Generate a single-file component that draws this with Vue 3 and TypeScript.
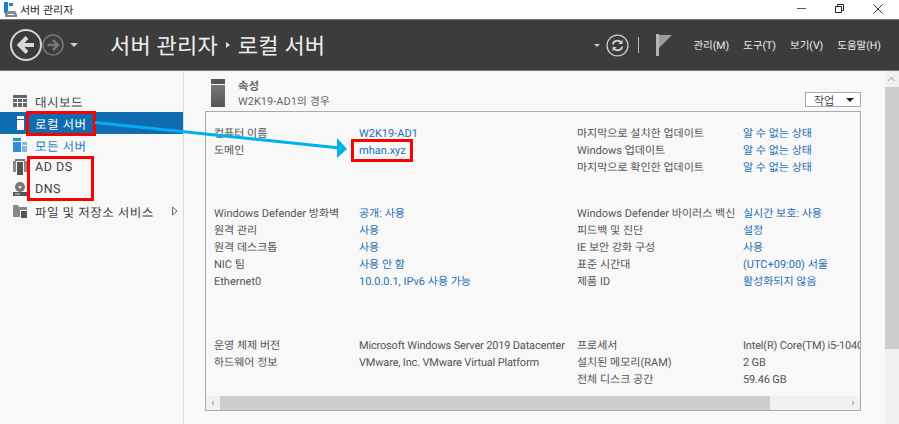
<script setup lang="ts">
interface Row { l1: string; v1: string; link1?: boolean; l2: string; v2: string; link2?: boolean }
const block1: Row[] = [
  { l1: '컴퓨터 이름', v1: 'W2K19-AD1', link1: true, l2: '마지막으로 설치한 업데이트', v2: '알 수 없는 상태', link2: true },
  { l1: '도메인', v1: 'mhan.xyz', link1: true, l2: 'Windows 업데이트', v2: '알 수 없는 상태', link2: true },
  { l1: '', v1: '', l2: '마지막으로 확인한 업데이트', v2: '알 수 없는 상태', link2: true },
]
const block2: Row[] = [
  { l1: 'Windows Defender 방화벽', v1: '공개: 사용', link1: true, l2: 'Windows Defender 바이러스 백신', v2: '실시간 보호: 사용', link2: true },
  { l1: '원격 관리', v1: '사용', link1: true, l2: '피드백 및 진단', v2: '설정', link2: true },
  { l1: '원격 데스크톱', v1: '사용', link1: true, l2: 'IE 보안 강화 구성', v2: '사용', link2: true },
  { l1: 'NIC 팀', v1: '사용 안 함', link1: true, l2: '표준 시간대', v2: '(UTC+09:00) 서울', link2: true },
  { l1: 'Ethernet0', v1: '10.0.0.1, IPv6 사용 가능', link1: true, l2: '제품 ID', v2: '활성화되지 않음', link2: true },
]
const block3: Row[] = [
  { l1: '운영 체제 버전', v1: 'Microsoft Windows Server 2019 Datacenter', l2: '프로세서', v2: 'Intel(R) Core(TM) i5-10400' },
  { l1: '하드웨어 정보', v1: 'VMware, Inc. VMware Virtual Platform', l2: '설치된 메모리(RAM)', v2: '2 GB' },
  { l1: '', v1: '', l2: '전체 디스크 공간', v2: '59.46 GB' },
]
const blocks = [block1, block2, block3]
</script>

<template>
  <div class="app">
    <header class="titlebar">
      <svg class="appicon" width="16" height="16" viewBox="0 0 16 16">
        <rect x="2" y="0" width="4" height="11" fill="#1f7fc4" />
        <rect x="7" y="1" width="4" height="3" fill="#1f7fc4" />
        <path d="M5 9h8l2 3v3H3v-4z" fill="#7d8c98" />
        <rect x="6" y="12" width="6" height="1" fill="#fff" />
      </svg>
      <span class="apptitle">서버 관리자</span>
      <div class="winctl">
        <svg width="14" height="14" viewBox="0 0 14 14"><path d="M2 6.500h9" stroke="#555" fill="none" /></svg>
        <svg width="14" height="14" viewBox="0 0 14 14"><path d="M2.500 4.500h6v6h-6zM4.500 4.500v-2h6v6h-2" stroke="#222" fill="none" /></svg>
        <svg width="14" height="14" viewBox="0 0 14 14"><path d="M2.500 2.500l9 9M11.500 2.500l-9 9" stroke="#333" fill="none" /></svg>
      </div>
    </header>

    <nav class="navbar">
      <svg class="back" width="34" height="34" viewBox="0 0 34 34">
        <circle cx="17" cy="17" r="15" fill="none" stroke="#d8d8d8" stroke-width="2" />
        <path d="M25 17H11M18 9.500L10.500 17l7.500 7.500" fill="none" stroke="#d8d8d8" stroke-width="4" />
      </svg>
      <svg class="fwd" width="22" height="22" viewBox="0 0 22 22">
        <circle cx="11" cy="11" r="10" fill="none" stroke="#777" stroke-width="1.500" />
        <path d="M5.500 11H15M11 6l5 5-5 5" fill="none" stroke="#777" stroke-width="2.500" />
      </svg>
      <span class="caret"></span>
      <div class="crumb">
        <span>서버 관리자</span><span class="sep"></span><span>로컬 서버</span>
      </div>
      <div class="tools">
        <span class="caret small"></span>
        <svg class="refresh" width="23" height="23" viewBox="0 0 22 22">
          <circle cx="11" cy="11" r="10" fill="none" stroke="#cfcfcf" stroke-width="1.200" />
          <path d="M6.500 10a4.500 4 0 0 1 8-2M15.500 12a4.500 4 0 0 1-8 2" fill="none" stroke="#cfcfcf" stroke-width="1.800" />
          <path d="M15.800 5.500v4h-4zM6.200 16.500v-4h4z" fill="#cfcfcf" />
        </svg>
        <span class="bar"></span>
        <svg class="flag" width="16" height="22" viewBox="0 0 16 22">
          <rect x="0" y="0" width="3" height="22" fill="#b5b5b5" />
          <path d="M3 1h13L3 14z" fill="#9c9c9c" />
        </svg>
        <div class="menu">
          <span>관리(M)</span><span>도구(T)</span><span>보기(V)</span><span>도움말(H)</span>
        </div>
      </div>
    </nav>

    <div class="body">
      <aside class="side">
        <div class="item">
          <svg class="ic" width="14" height="14" viewBox="0 0 14 14">
            <path fill="#666" d="M0 1h14v3H0zM0 5h4v3H0zM5 5h4v3H5zM10 5h4v3h-4zM0 9h4v4H0zM5 9h4v4H5zM10 9h4v4h-4z" />
          </svg>
          <span>대시보드</span>
        </div>
        <div class="item active">
          <svg class="ic" width="14" height="14" viewBox="0 0 14 14">
            <rect x="4" y="0" width="7" height="14" fill="#fff" />
            <rect x="4" y="3" width="7" height="1" fill="#0f6cb0" />
          </svg>
          <span>로컬 서버</span>
        </div>
        <div class="item blue">
          <svg class="ic" width="14" height="14" viewBox="0 0 14 14">
            <rect x="0" y="0" width="8" height="14" fill="#2e8fd8" /><rect x="0" y="3" width="8" height="1" fill="#fff" />
            <rect x="9" y="4" width="5" height="10" fill="#7cb8e6" /><rect x="9" y="7" width="5" height="1" fill="#fff" />
          </svg>
          <span>모든 서버</span>
        </div>
        <div class="item">
          <svg class="ic" width="14" height="16" viewBox="0 0 14 16">
            <rect x="0" y="2" width="3" height="11" fill="#888" /><rect x="11" y="2" width="3" height="11" fill="#888" />
            <rect x="4" y="3" width="6" height="13" fill="#555" /><rect x="2" y="0" width="10" height="2" fill="#777" />
          </svg>
          <span>AD DS</span>
        </div>
        <div class="item">
          <svg class="ic" width="14" height="15" viewBox="0 0 14 15">
            <circle cx="7" cy="5" r="5" fill="#777" /><circle cx="7" cy="5" r="1.500" fill="#ddd" />
            <rect x="0" y="10" width="14" height="4" fill="#555" /><rect x="2" y="11.500" width="5" height="1" fill="#ddd" />
          </svg>
          <span>DNS</span>
        </div>
        <div class="item">
          <svg class="ic" width="14" height="14" viewBox="0 0 14 14">
            <path fill="#888" d="M0 1h5l1 2h8v3H7v7H0z" /><rect x="8" y="7" width="6" height="7" fill="#555" />
          </svg>
          <span>파일 및 저장소 서비스</span>
          <svg class="expand" width="6" height="10" viewBox="0 0 6 10"><path d="M.500 1l4.500 4-4.500 4z" fill="#f8f8f8" stroke="#666" /></svg>
        </div>
      </aside>

      <main class="content">
        <div class="scrollpane">
          <div class="head">
            <div class="tower"></div>
            <div class="headtext">
              <div class="h1">속성</div>
              <div class="h2">W2K19-AD1의 경우</div>
            </div>
            <button class="task"><span>작업</span><i></i></button>
          </div>
          <section class="panel">
            <div class="grid-wrap">
              <div v-for="(block, bi) in blocks" :key="bi" class="block">
                <div v-for="(r, ri) in block" :key="ri" class="row">
                  <span class="c1">{{ r.l1 }}</span>
                  <span class="c2" :class="{ link: r.link1 }">{{ r.v1 }}</span>
                  <span class="c3">{{ r.l2 }}</span>
                  <span class="c4" :class="{ link: r.link2 }">{{ r.v2 }}</span>
                </div>
              </div>
            </div>
            <div class="hscroll">
              <span class="arr">‹</span>
              <div class="hthumb"></div>
              <span class="arr">›</span>
            </div>
          </section>
        </div>
        <div class="vscroll">
          <span class="uparr"></span>
          <div class="vthumb"></div>
        </div>
      </main>
    </div>

    <!-- annotations drawn over the screenshot -->
    <div class="mark m1"></div>
    <div class="mark m2"></div>
    <div class="mark m3"></div>
    <svg class="arrow" width="899" height="424" viewBox="0 0 899 424">
      <path d="M95 122.500L340 148" stroke="#00b0f0" stroke-width="3" fill="none" />
      <path d="M337 138L347 149L337 158z" fill="#00b0f0" />
    </svg>
  </div>
</template>

<style>
html, body { margin: 0; padding: 0; background: #fff; overflow: hidden; }
</style>

<style scoped>
.app {
  position: relative;
  width: 899px;
  height: 424px;
  overflow: hidden;
  font-family: Roboto, "Noto Sans CJK KR", sans-serif;
  font-size: 11px;
  text-rendering: geometricPrecision;
  color: #555;
  background: #f8f8f8;
  display: flex;
  flex-direction: column;
}
.titlebar {
  height: 19px;
  flex: none;
  background: #fff;
  display: flex;
  align-items: center;
  padding-left: 2px;
  color: #222;
}
.appicon { margin-right: 2px; }
.apptitle { font-size: 11px; }
.winctl {
  margin-left: auto;
  display: flex;
  gap: 24px;
  padding-right: 14px;
  margin-top: -1px;
}
.navbar {
  height: 52px;
  flex: none;
  box-sizing: border-box;
  background: #3c3c3c;
  border-top: 1px solid #777;
  border-bottom: 1px solid #777;
  display: flex;
  align-items: center;
  padding-left: 9px;
  color: #fff;
}
.back { flex: none; }
.fwd { flex: none; margin-left: -1px; }
.caret {
  width: 0;
  height: 0;
  border-left: 4px solid transparent;
  border-right: 4px solid transparent;
  border-top: 4px solid #ccc;
  margin-left: 6px;
}
.caret.small { border-left-width: 3px; border-right-width: 3px; border-top-width: 3px; margin: 0; }
.crumb {
  margin-left: 32px;
  font-size: 22px;
  color: #f0f0f0;
  display: flex;
  align-items: center;
  letter-spacing: 0.2px;
}
.sep {
  width: 0;
  height: 0;
  border-top: 3px solid transparent;
  border-bottom: 3px solid transparent;
  border-left: 4px solid #ddd;
  margin: 0 8px;
}
.tools {
  margin-left: auto;
  display: flex;
  align-items: center;
  height: 100%;
}
.refresh { margin-left: 6px; }
.bar { width: 1px; height: 16px; background: #bbb; margin: 0 17px 0 9px; }
.flag { margin-right: 21px; }
.menu {
  display: flex;
  gap: 14px;
  font-size: 10.500px;
  color: #eee;
  padding-right: 18px;
}
.body {
  flex: 1;
  display: flex;
  min-height: 0;
}
.side {
  width: 184px;
  flex: none;
  box-sizing: border-box;
  border-right: 1px solid #ddd;
  padding-top: 19px;
  background: #f8f8f8;
  height: 100%;
}
.item {
  height: 22px;
  display: flex;
  align-items: center;
  padding-left: 13px;
  font-size: 12.500px;
  color: #444;
  letter-spacing: 0.5px;
}
.item.active { background: #0f6cb0; color: #fff; }
.item.blue { color: #1f7fc4; }
.ic { flex: none; margin-right: 8px; }
.expand {
  flex: none;
  margin-left: auto;
  margin-right: 5px;
}
.content {
  flex: 1;
  display: flex;
  min-width: 0;
}
.scrollpane {
  flex: 1;
  min-width: 0;
  box-sizing: border-box;
  padding: 8px 24px 0 21px;
}
.head {
  height: 32px;
  display: flex;
  align-items: flex-start;
}
.tower {
  width: 14px;
  height: 28px;
  margin: 0 0 0 6px;
  flex: none;
  background: linear-gradient(#555 0 5px, #f8f8f8 5px 6px, #777 6px, #555);
}
.headtext { margin-left: 13px; flex: 1; margin-top: -1px; }
.h1 { font-size: 11.500px; font-weight: 700; color: #666; line-height: 16px; }
.h2 { font-size: 11px; color: #666; line-height: 15px; }
.task {
  align-self: flex-end;
  width: 56px;
  height: 15px;
  box-sizing: border-box;
  background: #fff;
  border: 1px solid #aaa;
  padding: 0 6px 0 8px;
  display: flex;
  align-items: center;
  justify-content: space-between;
  font: inherit;
  font-size: 11px;
  color: #444;
  margin-bottom: 4px;
}
.task i {
  width: 0;
  height: 0;
  border-left: 4px solid transparent;
  border-right: 4px solid transparent;
  border-top: 4px solid #222;
}
.panel {
  box-sizing: border-box;
  height: 300px;
  border: 1px solid #aaa;
  display: flex;
  flex-direction: column;
  background: #f8f8f8;
  overflow: hidden;
}
.grid-wrap {
  flex: 1;
  padding: 13px 0 0 8px;
  display: flex;
  flex-direction: column;
  gap: 29px;
  overflow: hidden;
}
.block:last-child { margin-top: 18px; }
.block:last-child .c2,
.block:last-child .c4 { letter-spacing: -0.17px; }
.row {
  display: grid;
  grid-template-columns: 145px 218px 166px 1fr;
  height: 17px;
  line-height: 17px;
  white-space: nowrap;
}
.c4 { overflow: hidden; }
.link { color: #1f6fb5; }
.hscroll {
  height: 14px;
  flex: none;
  display: flex;
  align-items: center;
  background: #f0f0f0;
}
.arr { width: 14px; text-align: center; color: #888; line-height: 12px; flex: none; }
.hthumb { width: 550px; height: 14px; background: #cdcdcd; }
.hscroll .arr:last-child { margin-left: auto; }
.vscroll {
  width: 14px;
  flex: none;
  background: #f0f0f0;
  display: flex;
  flex-direction: column;
}
.uparr {
  height: 16px;
  position: relative;
}
.uparr::before {
  content: "";
  position: absolute;
  left: 4px;
  top: 7px;
  width: 4px;
  height: 4px;
  border-left: 1px solid #aaa;
  border-top: 1px solid #aaa;
  transform: rotate(45deg);
}
.vthumb { height: 262px; background: #cdcdcd; }
.mark {
  position: absolute;
  border: 3px solid #f00;
  box-sizing: border-box;
}
.m1 { left: 26px; top: 111px; width: 70px; height: 25px; }
.m2 { left: 27px; top: 156px; width: 67px; height: 45px; }
.m3 { left: 351px; top: 139px; width: 62px; height: 23px; }
.arrow { position: absolute; left: 0; top: 0; pointer-events: none; }
</style>
